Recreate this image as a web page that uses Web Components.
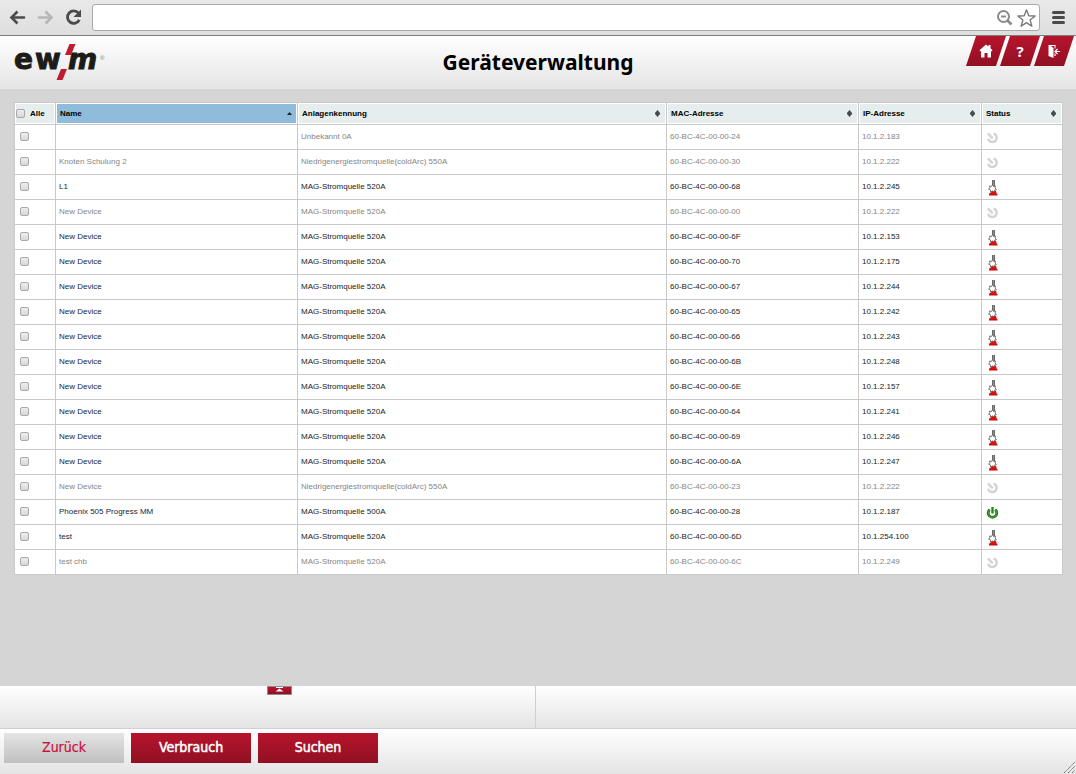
<!DOCTYPE html>
<html lang="de">
<head>
<meta charset="utf-8">
<title>Geräteverwaltung</title>
<style>
html, body { margin: 0; }
body { background: #d5d5d5; font-family: "Liberation Sans", Arial, sans-serif; color: #000; }
</style>
</head>
<body>
<device-manager></device-manager>
<script>
const define = (name, html, setup) => {
  const template = document.createElement('template');
  template.innerHTML = html;
  customElements.define(name, class extends HTMLElement {
    constructor() {
      super();
      this.attachShadow({ mode: 'open' }).append(template.content.cloneNode(true));
    }
    connectedCallback() {
      if (setup && !this.ready) { this.ready = true; setup(this, this.shadowRoot); }
    }
  });
};

define('browser-bar', `
<style>
:host { display: flex; align-items: center; height: 35px; padding: 0 8px; border-bottom: 1px solid #7d7d7d; background: linear-gradient(#e9e9e9, #dedede); }
button { display: block; padding: 0; border: 0; background: none; flex: none; }
svg { display: block; }
.nav { display: flex; gap: 8px; margin-right: 8px; }
.nav button { width: 20px; }
.address { flex: 1; display: flex; align-items: center; gap: 2px; height: 25px; padding-right: 3px; border: 1px solid #a9a9a9; border-radius: 3px; background: #fff; margin-right: 10px; }
input { flex: 1; min-width: 0; height: 21px; border: 0; padding: 0 8px; background: none; outline: 0; font-size: 13px; }
</style>
<div class="nav">
  <button aria-label="Zurück"><svg width="20" height="20" viewBox="0 0 20 20" fill="none" stroke="#4b4b4b" stroke-width="2.6"><path d="M16 9.500H4" stroke-linecap="round"/><path d="M9.500 3.500L3.500 9.500l6 6"/></svg></button>
  <button aria-label="Vorwärts"><svg width="20" height="20" viewBox="0 0 20 20" fill="none" stroke="#b6b6b6" stroke-width="2.6"><path d="M3 9.500H15" stroke-linecap="round"/><path d="M9.500 3.500l6 6-6 6"/></svg></button>
  <button aria-label="Neu laden"><svg width="20" height="20" viewBox="0 0 20 20"><path d="M14.500 5.200A6.200 6.200 0 1 0 15.300 11.800" fill="none" stroke="#4b4b4b" stroke-width="2.8"/><path d="M17 1.500v7.500H9.500z" fill="#4b4b4b"/></svg></button>
</div>
<div class="address">
  <input type="text" aria-label="Adresse">
  <button aria-label="Zoom"><svg width="18" height="20" viewBox="0 0 18 20" fill="none" stroke="#8b8b8b" stroke-width="2"><circle cx="7.500" cy="8.500" r="5.5"/><path d="M5 8.500h5"/><path d="M11.500 12.500l4 4" stroke-width="2.600"/></svg></button>
  <button aria-label="Lesezeichen"><svg width="20" height="20" viewBox="0 0 20 20"><path d="M10.500 1.800l2.300 6 6.300.2-5 4 1.800 6.200-5.400-3.600-5.400 3.600L6.900 12l-5-4 6.300-.2z" fill="#fff" stroke="#777" stroke-width="1.300" stroke-linejoin="round"/></svg></button>
</div>
<button aria-label="Menü"><svg width="18" height="16" viewBox="0 0 18 16" stroke="#4a4a4a" stroke-width="3" stroke-linecap="round"><path d="M3.500 2.500h10M3.500 7.500h10M3.500 12.500h10"/></svg></button>
`);

define('ewm-logo', `
<style>:host { display: block; } svg { display: block; }</style>
<svg width="94" height="40" viewBox="0 0 94 40" role="img" aria-label="ewm">
  <g font-family="DejaVu Sans, sans-serif" font-weight="700" font-size="28" fill="#1b1b19" stroke="#1b1b19" stroke-width="1">
    <text x="0" y="27">e</text><text x="21" y="27">w</text><text x="54" y="27" font-style="oblique">m</text>
  </g>
  <path d="M55.500 2h6l-4.500 11h-6zM47 27h6l-4.500 11h-6z" fill="#bd1c33"/>
  <text x="86" y="18" font-family="Liberation Sans" font-size="6" fill="#777">®</text>
</svg>`);

define('nav-tab', `
<style>
:host { display: block; }
a { display: flex; align-items: center; justify-content: center; width: 40px; height: 30px; box-sizing: border-box; clip-path: polygon(25% 0, 100% 0, 75% 100%, 0 100%); background: linear-gradient(#b7142c, #911023); color: #fff; text-decoration: none; font: 700 15px "Noto Sans", sans-serif; }
</style>
<a href="#"><slot></slot></a>`, (el, root) => root.querySelector('a').setAttribute('aria-label', el.getAttribute('label')));

define('page-header', `
<style>
:host { display: grid; grid-template-columns: 1fr auto 1fr; height: 53px; background: linear-gradient(#fff, #e4e4e4); }
ewm-logo { padding: 6px 0 0 14px; }
h1 { margin: 0; font: 700 21px/53px "Noto Sans", sans-serif; }
nav { display: flex; justify-content: flex-end; align-items: flex-start; padding-right: 2px; }
nav-tab + nav-tab { margin-left: -6px; }
svg { display: block; }
</style>
<ewm-logo></ewm-logo>
<h1><slot></slot></h1>
<nav>
  <nav-tab label="Startseite"><svg width="14" height="14" viewBox="0 0 14 14" fill="#fff"><path d="M7 .500l2.500 2V1h2v3.200l2 2-1 1.300L12 7v6.500H8.500V9h-3v4.500H2V7l-.500.500L.500 6.200z"/></svg></nav-tab>
  <nav-tab label="Hilfe">?</nav-tab>
  <nav-tab label="Abmelden"><svg width="14" height="16" viewBox="0 0 14 16"><path d="M1.500 2h7v3.500H7.500V3H4l2.500 2v10l-5-2z" fill="#fff"/><path d="M8 13V10.500M13 8.500H8.500M10.500 6L8 8.500 10.500 11" fill="none" stroke="#fff" stroke-width="1.200"/></svg></nav-tab>
</nav>`);

const statusArt = {
  off: '<path d="M8.500 3.600A4.300 4.300 0 1 1 3.200 8.800" fill="none" stroke="#d4d4d4" stroke-width="2.400"/><path d="M2.800 3.300l5 5" stroke="#d4d4d4" stroke-width="2.400"/>',
  on: '<path d="M4.800 4.600a4.300 4.300 0 1 0 5.400 0" fill="none" stroke="#286c22" stroke-width="2.800"/><path d="M4.800 4.800a4.200 4.200 0 1 0 5.400 0" fill="none" stroke="#3f9730" stroke-width="1.400"/><path d="M7.500 2v6.500" stroke="#2f8626" stroke-width="2.400"/>',
  weld: '<path d="M7 0h3v6H7z" fill="#8a8a8a"/><path d="M7.500 0v6M9.500 0v6" stroke="#6a6a6a"/><path d="M4 15l.500-2L6 12.500 8 9l1.500 2 1.500-.500.500 2.500 1 2z" fill="#e20d0d"/><path d="M7.500 4.500l1 2 2-.5-.5 2 1.500 1.500-2 .5-.5 2-1.500-1-2 1V10l-2-1L5 7.800 4.500 6l2 .5z" fill="#fff" stroke="#5a5a5a" stroke-width=".8"/><path d="M4 15h8.500" stroke="#b01212"/>'
};
define('status-icon', `<style>:host { display: block; } svg { display: block; }</style><svg width="16" height="16" viewBox="0 0 16 16" role="img"></svg>`, (el, root) => {
  const svg = root.querySelector('svg');
  const kind = el.getAttribute('kind');
  svg.innerHTML = statusArt[kind];
  svg.setAttribute('aria-label', { off: 'Offline', on: 'Bereit', weld: 'Schweißen' }[kind]);
});

const N = 'New Device', M = 'MAG-Stromquelle 520A', L = 'Niedrigenergiestromquelle(coldArc) 550A';
const devices = [
  ['', 'Unbekannt 0A', '24', '2.183', 'off'],
  ['Knoten Schulung 2', L, '30', '2.222', 'off'],
  ['L1', M, '68', '2.245', 'weld'],
  [N, M, '00', '2.222', 'off'],
  [N, M, '6F', '2.153', 'weld'],
  [N, M, '70', '2.175', 'weld'],
  [N, M, '67', '2.244', 'weld'],
  [N, M, '65', '2.242', 'weld'],
  [N, M, '66', '2.243', 'weld'],
  [N, M, '6B', '2.248', 'weld'],
  [N, M, '6E', '2.157', 'weld'],
  [N, M, '64', '2.241', 'weld'],
  [N, M, '69', '2.246', 'weld'],
  [N, M, '6A', '2.247', 'weld'],
  [N, L, '23', '2.222', 'off'],
  ['Phoenix 505 Progress MM', 'MAG-Stromquelle 500A', '28', '2.187', 'on'],
  ['test', M, '6D', '254.100', 'weld'],
  ['test chb', M, '6C', '2.249', 'off']
];
const sorter = '<svg width="5" height="7" viewBox="0 0 5 7" fill="#444c4c"><path d="M2.500 0L5 3v1L2.500 7 0 4V3z"/></svg>';
const heads = ['Name', 'Anlagenkennung', 'MAC-Adresse', 'IP-Adresse', 'Status'];

define('device-table', `
<style>
:host { display: block; }
table { width: 100%; table-layout: fixed; border-collapse: collapse; background: #fff; font-size: 8px; line-height: 12px; }
.pick { width: 41px; } .name { width: 242px; } .mac { width: 192px; } .ip { width: 123px; } .state { width: 81px; }
th, td { border: 1px solid #c9c9c9; box-sizing: border-box; text-align: left; vertical-align: middle; }
th { height: 22px; padding: 1px; font-weight: 700; }
td { height: 25px; padding: 0 3px; color: #222; overflow: hidden; white-space: nowrap; }
th > div { display: flex; align-items: center; justify-content: space-between; height: 19px; padding: 0 5px 0 3px; background: #e5eeec; }
th > .all { justify-content: flex-start; gap: 5px; padding: 0; }
th > .sorted { padding-right: 4px; background: #8fbcdb; }
svg { display: block; }
td:nth-child(2) { color: #17263c; }
.off td, .off td:nth-child(2) { color: #858585; }
td:first-child { padding-left: 5px; }
input { appearance: none; display: block; box-sizing: border-box; width: 9px; height: 9px; margin: 0; border: 1px solid #a9a9a9; border-radius: 2px; background: linear-gradient(#eee, #d8d8d8); }
td input { margin-bottom: 1px; }
status-icon { margin-top: 2px; }
</style>
<table>
  <colgroup><col class="pick"><col class="name"><col><col class="mac"><col class="ip"><col class="state"></colgroup>
  <thead><tr></tr></thead><tbody></tbody>
</table>`, (el, root) => {
  root.querySelector('thead tr').innerHTML =
    '<th><div class="all"><input type="checkbox" id="all"><label for="all">Alle</label></div></th>' +
    heads.map((h, i) => `<th scope="col"><div${i ? '' : ' class="sorted"'}>${h}${i ? sorter : '<svg width="5" height="3" viewBox="0 0 5 3"><path d="M0 3h5L2.500 0z" fill="#222"/></svg>'}</div></th>`).join('');
  root.querySelector('tbody').innerHTML = devices.map(([name, plant, mac, ip, kind]) =>
    `<tr class="${kind}"><td><input type="checkbox" aria-label="60-BC-4C-00-00-${mac}"></td><td>${name}</td><td>${plant}</td><td>60-BC-4C-00-00-${mac}</td><td>10.1.${ip}</td><td><status-icon kind="${kind}"></status-icon></td></tr>`).join('');
});

define('info-panel', `
<style>
:host { display: grid; grid-template-columns: 1fr 1fr; height: 42px; padding-right: 4px; border-bottom: 1px solid #d0d0d0; background: linear-gradient(#fff, #e4e4e4); }
div { display: flex; align-items: flex-start; justify-content: center; }
.left { border-right: 1px solid #cfcfcf; padding-left: 24px; }
button { display: flex; justify-content: center; width: 25px; height: 9px; padding: 0; border: 1px solid #8d8d8d; background: linear-gradient(#b7142c, #911023); }
svg { display: block; }
</style>
<div class="left"><button aria-label="Ausklappen"><svg width="9" height="5" viewBox="0 0 9 5"><path d="M1 .500h7" stroke="#fff"/><path d="M.500 4.500h8L4.500 1.500z" fill="#fff"/></svg></button></div>
<div></div>`);

define('action-button', `
<style>
:host { display: block; }
button { display: block; width: 120px; height: 30px; padding: 0 0 2px; border: 0; color: #fff; background: linear-gradient(#b7142c, #911023); font: 400 14px/28px "DejaVu Sans Condensed", "DejaVu Sans", sans-serif; -webkit-text-stroke: 0.5px; }
:host([plain]) button { color: #c8103e; background: linear-gradient(#e4e4e4, #c0c0c0); -webkit-text-stroke: 0.2px; }
</style>
<button><slot></slot></button>`);

define('action-bar', `
<style>
:host { display: flex; gap: 7px; position: relative; height: 45px; box-sizing: border-box; padding: 4px; background: linear-gradient(#fff, #e4e4e4); }
svg { position: absolute; right: 0; bottom: 0; }
</style>
<slot></slot>
<svg width="13" height="13" viewBox="0 0 13 13" stroke="#777" stroke-dasharray="1.400 .4"><path d="M1 12L12 1M5 12l7-7M9 12l3-3"/></svg>`);

define('device-manager', `
<style>
:host { display: flex; flex-direction: column; min-height: 100vh; }
main { flex: 1; padding: 13px 13px 13px 14px; }
</style>
<browser-bar></browser-bar>
<page-header>Geräteverwaltung</page-header>
<main><device-table></device-table></main>
<info-panel></info-panel>
<action-bar>
  <action-button plain>Zurück</action-button>
  <action-button>Verbrauch</action-button>
  <action-button>Suchen</action-button>
</action-bar>`);
</script>
</body>
</html>
